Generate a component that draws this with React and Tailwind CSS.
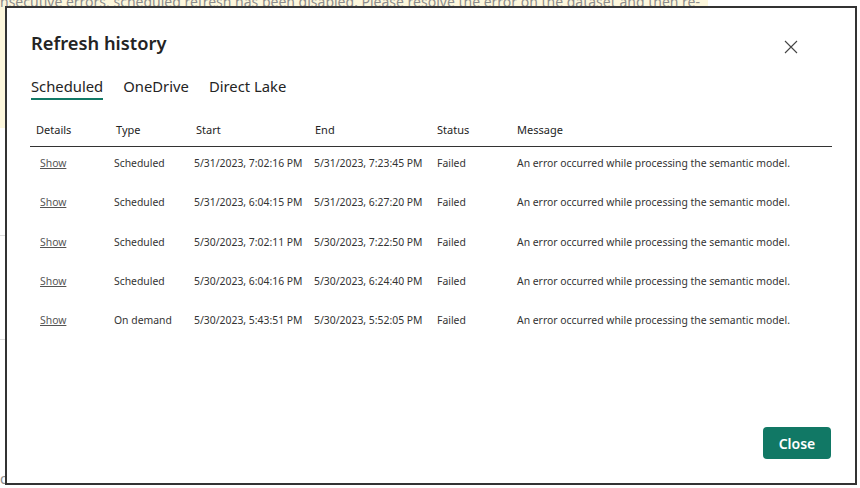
import React from "react";

const rows = [
  ["Scheduled", "5/31/2023, 7:02:16 PM", "5/31/2023, 7:23:45 PM"],
  ["Scheduled", "5/31/2023, 6:04:15 PM", "5/31/2023, 6:27:20 PM"],
  ["Scheduled", "5/30/2023, 7:02:11 PM", "5/30/2023, 7:22:50 PM"],
  ["Scheduled", "5/30/2023, 6:04:16 PM", "5/30/2023, 6:24:40 PM"],
  ["On demand", "5/30/2023, 5:43:51 PM", "5/30/2023, 5:52:05 PM"],
];

const font = { fontFamily: '"Segoe UI", "Noto Sans", "Open Sans", sans-serif' };

export default function App() {
  return (
    <div className="relative w-[860px] h-[488px] bg-white overflow-hidden" style={font}>
      {/* background page */}
      <div className="flex flex-col">
        <div className="w-[708px] h-[32px] bg-[#fdf7dc] text-[14px] leading-[12px] text-[#8d8d8d] whitespace-nowrap -mt-[4px] pt-0">
          nsecutive errors, scheduled refresh has been disabled. Please resolve the error on the dataset and then re-
        </div>
        <div className="w-[20px] h-[100px] bg-[#fdf7dc]"></div>
        <div className="w-[20px] h-[108px] border-b border-[#ddd]"></div>
        <div className="w-[20px] h-[104px] border-b border-[#ddd]"></div>
        <div className="pt-[128px] text-[14px] text-[#8d8d8d] whitespace-nowrap">o credentials</div>
      </div>

      {/* dialog */}
      <div className="absolute left-[5px] top-[6px] w-[852px] h-[479px] bg-white border-2 border-[#333] flex flex-col">
        <div className="flex items-start justify-between pl-[24px] pr-[57px] pt-[21px]">
          <div className="text-[18.3px] leading-[28px] font-semibold text-[#242424]">Refresh history</div>
          <svg width="14" height="14" viewBox="0 0 14 14" className="mt-[11px]">
            <path d="M1 1 L13 13 M13 1 L1 13" stroke="#444" strokeWidth="1.1" />
          </svg>
        </div>

        <div className="flex gap-[20px] pl-[24px] mt-[19px] text-[14.8px] leading-[20px] text-[#242424]">
          <div className="flex flex-col">
            <span>Scheduled</span>
            <div className="h-[2px] bg-[#117865] mt-[2px]"></div>
          </div>
          <span>OneDrive</span>
          <span>Direct Lake</span>
        </div>

        <div className="mx-[23px] mt-[15px] flex flex-col text-[#242424]">
          <div className="grid grid-cols-[80px_80px_119px_122px_80px_1fr] h-[32px] items-center border-b border-[#333] text-[11px]">
            <span className="pl-[6px]">Details</span>
            <span className="pl-[6px]">Type</span>
            <span className="pl-[6px]">Start</span>
            <span className="pl-[6px]">End</span>
            <span className="pl-[6px]">Status</span>
            <span className="pl-[6px]">Message</span>
          </div>
          {rows.map((r, i) => (
            <div key={i} className="grid grid-cols-[80px_80px_119px_122px_80px_1fr] h-[39.25px] pt-[9px] text-[10.4px] leading-[14px] text-[#333]">
              <span className="pl-[10px] underline text-[#555]">Show</span>
              <span className="pl-[4px]">{r[0]}</span>
              <span className="pl-[4px] whitespace-nowrap">{r[1]}</span>
              <span className="pl-[5px] whitespace-nowrap">{r[2]}</span>
              <span className="pl-[6px]">Failed</span>
              <span className="pl-[6px] whitespace-nowrap">An error occurred while processing the semantic model.</span>
            </div>
          ))}
        </div>

        <div className="mt-auto flex justify-end pr-[24px] pb-[24px]">
          <button className="w-[68px] h-[32px] rounded-[4px] bg-[#117865] text-white text-[14px] font-semibold">Close</button>
        </div>
      </div>
    </div>
  );
}
